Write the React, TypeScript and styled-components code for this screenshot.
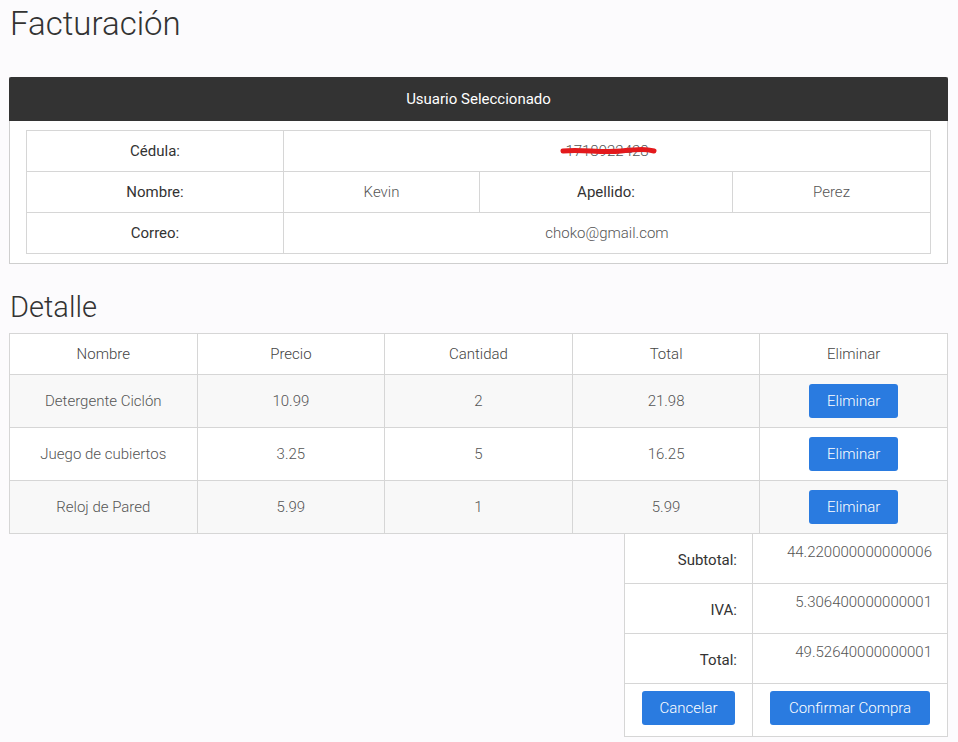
import React from "react";
import styled, { createGlobalStyle } from "styled-components";

const GlobalStyle = createGlobalStyle`
  html, body {
    margin: 0;
    padding: 0;
    background: #fcfbfd;
    font-family: Roboto, "Liberation Sans", sans-serif;
    color: #333;
  }
`;

const Page = styled.div`
  padding: 4px 10px 8px 9px;
`;

const Title = styled.h1`
  margin: 0 0 33px 1px;
  font-size: 33px;
  line-height: 40px;
  font-weight: 300;
  color: #333;
`;

const SubTitle = styled.h2`
  margin: 26px 0 9px 1px;
  font-size: 29px;
  line-height: 34px;
  font-weight: 300;
  color: #333;
`;

const Panel = styled.section`
  background: #fff;
  border: 1px solid #cfcfcf;
  border-top: none;
`;

const PanelHeader = styled.div`
  height: 44px;
  background: #333;
  color: #fff;
  display: flex;
  align-items: center;
  justify-content: center;
  font-size: 15px;
  margin: 0 -1px;
  border-radius: 2px 2px 0 0;
`;

const PanelBody = styled.div`
  padding: 9px 16px 9px 16px;
`;

const Table = styled.table`
  width: 100%;
  border-collapse: collapse;
  table-layout: fixed;
  background: #fff;
`;

const Cell = styled.td<{ $label?: boolean; $h?: number }>`
  border: 1px solid #d6d6d6;
  height: ${(p) => p.$h ?? 40}px;
  padding: 0 8px;
  text-align: center;
  font-size: 15px;
  font-weight: ${(p) => (p.$label ? 400 : 300)};
  color: ${(p) => (p.$label ? "#333" : "#555")};
`;

const HeadCell = styled.th`
  border: 1px solid #d6d6d6;
  height: 40px;
  padding: 0 8px;
  text-align: center;
  font-size: 15px;
  font-weight: 300;
  color: #444;
`;

const Row = styled.tr<{ $striped?: boolean }>`
  background: ${(p) => (p.$striped ? "#f8f8f8" : "#fff")};
`;

const Hidden = styled.span`
  position: relative;
  display: inline-block;
`;

const Scribble = styled.svg`
  position: absolute;
  left: -4px;
  top: 0;
  width: 96px;
  height: 14px;
  overflow: visible;
`;

const Button = styled.button<{ $w: number }>`
  width: ${(p) => p.$w}px;
  height: 34px;
  border: none;
  border-radius: 3px;
  background: #2a7be0;
  color: #fff;
  font-family: Roboto, "Liberation Sans", sans-serif;
  font-size: 15px;
  font-weight: 300;
  cursor: pointer;
`;

const Summary = styled.table`
  width: 324px;
  margin: -1px 0 0 auto;
  border-collapse: collapse;
  table-layout: fixed;
  background: #fff;
`;

const SumLabel = styled.td`
  box-sizing: border-box;
  border: 1px solid #d6d6d6;
  height: 50px;
  padding: 2px 15px 0 0;
  text-align: right;
  font-size: 15px;
  color: #333;
  vertical-align: middle;
`;

const SumValue = styled.td`
  box-sizing: border-box;
  border: 1px solid #d6d6d6;
  height: 50px;
  padding: 9px 15px 0 0;
  text-align: right;
  vertical-align: top;
  font-size: 15px;
  font-weight: 300;
  color: #555;
`;

const ActionCell = styled.td`
  box-sizing: border-box;
  border: 1px solid #d6d6d6;
  height: 53px;
  padding: 7px 0 0;
  text-align: center;
  vertical-align: top;
`;

const items = [
  { nombre: "Detergente Ciclón", precio: "10.99", cantidad: 2, total: "21.98" },
  { nombre: "Juego de cubiertos", precio: "3.25", cantidad: 5, total: "16.25" },
  { nombre: "Reloj de Pared", precio: "5.99", cantidad: 1, total: "5.99" },
];

const totals = [
  { label: "Subtotal:", value: "44.220000000000006" },
  { label: "IVA:", value: "5.306400000000001" },
  { label: "Total:", value: "49.52640000000001" },
];

const App = (): JSX.Element => {
  return (
    <Page>
      <GlobalStyle />
      <Title>Facturación</Title>

      <Panel>
        <PanelHeader>Usuario Seleccionado</PanelHeader>
        <PanelBody>
          <Table>
            <colgroup>
              <col style={{ width: 257 }} />
              <col style={{ width: 196 }} />
              <col style={{ width: 253 }} />
              <col />
            </colgroup>
            <tbody>
              <tr>
                <Cell $label>Cédula:</Cell>
                <Cell colSpan={3}>
                  <Hidden>
                    1718922428
                    <Scribble viewBox="0 0 96 14">
                      <path
                        d="M2 9 C 20 7, 40 11, 60 9 S 85 7, 93 9"
                        stroke="#e3191c"
                        strokeWidth="5"
                        strokeLinecap="round"
                        fill="none"
                      />
                    </Scribble>
                  </Hidden>
                </Cell>
              </tr>
              <tr>
                <Cell $label>Nombre:</Cell>
                <Cell>Kevin</Cell>
                <Cell $label>Apellido:</Cell>
                <Cell>Perez</Cell>
              </tr>
              <tr>
                <Cell $label>Correo:</Cell>
                <Cell colSpan={3}>choko@gmail.com</Cell>
              </tr>
            </tbody>
          </Table>
        </PanelBody>
      </Panel>

      <SubTitle>Detalle</SubTitle>
      <Table>
        <thead>
          <Row>
            <HeadCell>Nombre</HeadCell>
            <HeadCell>Precio</HeadCell>
            <HeadCell>Cantidad</HeadCell>
            <HeadCell>Total</HeadCell>
            <HeadCell>Eliminar</HeadCell>
          </Row>
        </thead>
        <tbody>
          {items.map((it, i) => (
            <Row key={it.nombre} $striped={i % 2 === 0}>
              <Cell $h={52}>{it.nombre}</Cell>
              <Cell $h={52}>{it.precio}</Cell>
              <Cell $h={52}>{it.cantidad}</Cell>
              <Cell $h={52}>{it.total}</Cell>
              <Cell $h={52}>
                <Button $w={89}>Eliminar</Button>
              </Cell>
            </Row>
          ))}
        </tbody>
      </Table>

      <Summary>
        <colgroup>
          <col style={{ width: 128 }} />
          <col />
        </colgroup>
        <tbody>
          {totals.map((t) => (
            <tr key={t.label}>
              <SumLabel>{t.label}</SumLabel>
              <SumValue>{t.value}</SumValue>
            </tr>
          ))}
          <tr>
            <ActionCell>
              <Button $w={93}>Cancelar</Button>
            </ActionCell>
            <ActionCell>
              <Button $w={160}>Confirmar Compra</Button>
            </ActionCell>
          </tr>
        </tbody>
      </Summary>
    </Page>
  );
};

export default App;
